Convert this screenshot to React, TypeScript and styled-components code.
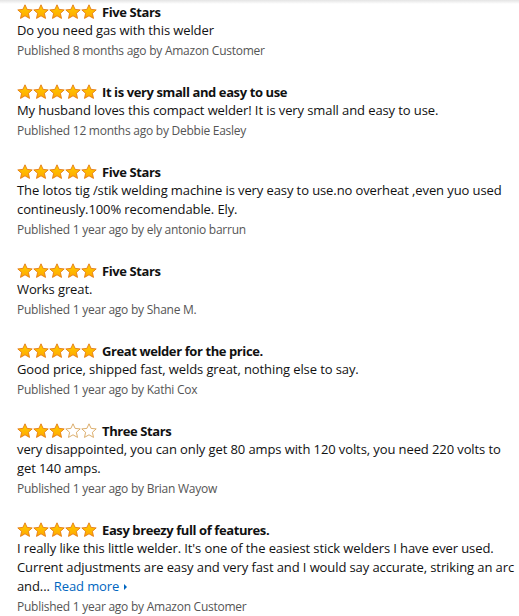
import React from "react";
import styled, {createGlobalStyle} from "styled-components";

const GlobalStyle = createGlobalStyle`
    html, body {
        margin: 0;
        padding: 0;
        background: #fff;
    }
    body {
        font-family: "Open Sans", "Noto Sans", sans-serif;
        color: #111;
    }
`;

const Page = styled.div`
    width: 519px;
    height: 616px;
    overflow: hidden;
    box-sizing: border-box;
    padding: 2px 0 0 17px;
    background: linear-gradient(#e4e4e4 0, #fff 4px, #fff 100%);
`;

const Review = styled.div`
    margin-bottom: 22px;
`;

const TitleRow = styled.div`
    display: flex;
    align-items: center;
    height: 19px;
    gap: 5px;
`;

const Stars = styled.div`
    display: flex;
    width: 80px;
    height: 16px;
`;

const Title = styled.span`
    font-size: 13px;
    font-weight: 700;
    letter-spacing: -0.4px;
    color: #111;
`;

const Body = styled.div`
    font-size: 13px;
    line-height: 19px;
    letter-spacing: -0.1px;
    color: #111;
`;

const ReadMore = styled.a`
    color: #0066c0;
    text-decoration: none;
    margin-left: 4px;
`;

const Caret = styled.span`
    display: inline-block;
    margin-left: 5px;
    width: 0;
    height: 0;
    border-top: 3px solid transparent;
    border-bottom: 3px solid transparent;
    border-left: 3px solid #0066c0;
    vertical-align: 1px;
`;

const Published = styled.div`
    margin-top: 1px;
    font-size: 12px;
    line-height: 19px;
    letter-spacing: -0.25px;
    color: #555;
`;

const Star = ({filled}: {filled: boolean}) => (
    <svg width="16" height="16" viewBox="0 0 16 16">
        <defs>
            <linearGradient id="starFill" x1="0" y1="0" x2="0" y2="1">
                <stop offset="0" stopColor="#ffce00" />
                <stop offset="1" stopColor="#ffa700" />
            </linearGradient>
        </defs>
        <path
            d="M8 0.8 L10.1 5.4 L15.2 5.9 L11.4 9.3 L12.5 14.4 L8 11.8 L3.5 14.4 L4.6 9.3 L0.8 5.9 L5.9 5.4 Z"
            fill={filled ? "url(#starFill)" : "#fff"}
            stroke={filled ? "#e47911" : "#d8a55c"}
            strokeWidth="0.9"
            strokeLinejoin="round"
        />
    </svg>
);

type ReviewData = {
    rating: number;
    title: string;
    body: string;
    date: string;
    author: string;
    more?: boolean;
};

const reviews: ReviewData[] = [
    {rating: 5, title: "Five Stars", body: "Do you need gas with this welder", date: "8 months ago", author: "Amazon Customer"},
    {
        rating: 5,
        title: "It is very small and easy to use",
        body: "My husband loves this compact welder! It is very small and easy to use.",
        date: "12 months ago",
        author: "Debbie Easley",
    },
    {
        rating: 5,
        title: "Five Stars",
        body: "The lotos tig /stik welding machine is very easy to use.no overheat ,even yuo used contineusly.100% recomendable. Ely.",
        date: "1 year ago",
        author: "ely antonio barrun",
    },
    {rating: 5, title: "Five Stars", body: "Works great.", date: "1 year ago", author: "Shane M."},
    {
        rating: 5,
        title: "Great welder for the price.",
        body: "Good price, shipped fast, welds great, nothing else to say.",
        date: "1 year ago",
        author: "Kathi Cox",
    },
    {
        rating: 3,
        title: "Three Stars",
        body: "very disappointed, you can only get 80 amps with 120 volts, you need 220 volts to get 140 amps.",
        date: "1 year ago",
        author: "Brian Wayow",
    },
    {
        rating: 5,
        title: "Easy breezy full of features.",
        body: "I really like this little welder. It's one of the easiest stick welders I have ever used. Current adjustments are easy and very fast and I would say accurate, striking an arc and...",
        date: "1 year ago",
        author: "Amazon Customer",
        more: true,
    },
];

export default function App() {
    return (
        <>
            <GlobalStyle />
            <Page>
                {reviews.map((r, i) => (
                    <Review key={i}>
                        <TitleRow>
                            <Stars>
                                {[0, 1, 2, 3, 4].map((s) => (
                                    <Star key={s} filled={s < r.rating} />
                                ))}
                            </Stars>
                            <Title>{r.title}</Title>
                        </TitleRow>
                        <Body>
                            {r.body}
                            {r.more && (
                                <ReadMore href="#">
                                    Read more
                                    <Caret />
                                </ReadMore>
                            )}
                        </Body>
                        <Published>
                            Published {r.date} by {r.author}
                        </Published>
                    </Review>
                ))}
            </Page>
        </>
    );
}
